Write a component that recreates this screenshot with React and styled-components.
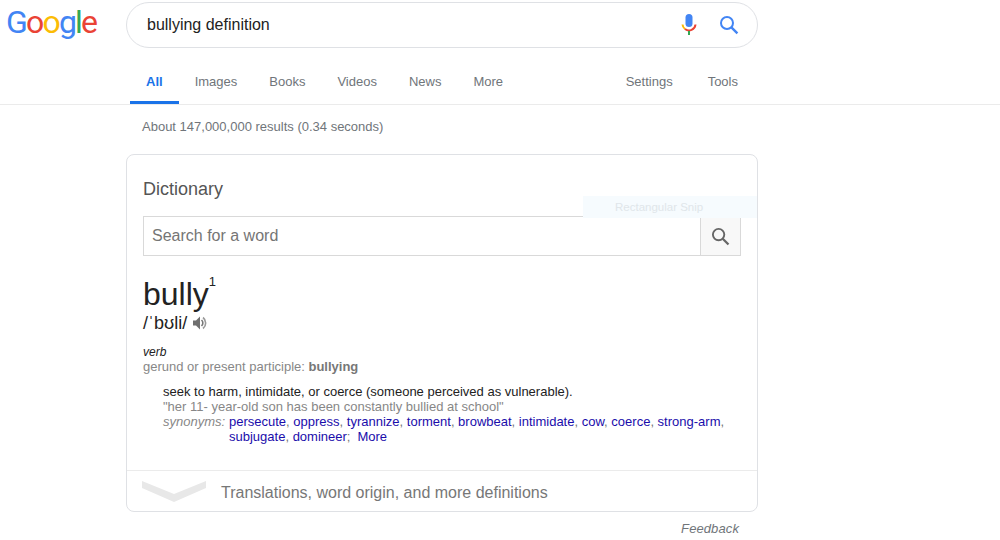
import React from 'react'
import styled, { createGlobalStyle } from 'styled-components'

const GlobalStyle = createGlobalStyle`
  html, body {
    margin: 0;
    background: #fff;
    font-family: "Liberation Sans", Arial, sans-serif;
    overflow: hidden;
  }
`

const Page = styled.div`
  position: relative;
  width: 1000px;
  height: 540px;
  overflow: hidden;
`

const Header = styled.header`
  height: 104px;
  border-bottom: 1px solid #ebebeb;
`

const TopRow = styled.div`
  display: flex;
  height: 50px;
  box-sizing: border-box;
  padding-top: 2px;
`

const Logo = styled.div`
  width: 126px;
  padding: 0 0 0 6px;
  box-sizing: border-box;
  font-family: Roboto, sans-serif;
  font-size: 32px;
  line-height: 41px;
  letter-spacing: -1.8px;
`

const LogoLetter = styled.span`
  color: ${p => p.$color};
`

const SearchBox = styled.div`
  width: 632px;
  height: 46px;
  box-sizing: border-box;
  display: flex;
  align-items: center;
  border: 1px solid #dfe1e5;
  border-radius: 23px;
  padding: 0 18px 0 20px;
  font-size: 16px;
  color: #222;
`

const Query = styled.span`
  flex: 1;
`

const IconSlot = styled.span`
  display: flex;
  margin-left: ${p => p.$gap || 0}px;
`

const Tabs = styled.nav`
  display: flex;
  width: 624px;
  height: 54px;
  margin-left: 130px;
  font-size: 13px;
  color: #70757a;
`

const Tab = styled.a`
  box-sizing: border-box;
  height: 54px;
  padding: 24px 16px 0;
  margin-left: ${p => p.$gap || 0}px;
  line-height: 16px;
  color: ${p => (p.$active ? '#1a73e8' : '#70757a')};
  font-weight: ${p => (p.$active ? 700 : 400)};
  border-bottom: 3px solid ${p => (p.$active ? '#1a73e8' : 'transparent')};
`

const TabSpacer = styled.span`
  flex: 1;
`

const Stats = styled.div`
  margin: 14px 0 0 142px;
  font-size: 13px;
  line-height: 16px;
  color: #70757a;
`

const Card = styled.section`
  width: 632px;
  height: 358px;
  box-sizing: border-box;
  margin: 19px 0 0 126px;
  border: 1px solid #dfe1e5;
  border-radius: 8px;
  display: flex;
  flex-direction: column;
`

const CardBody = styled.div`
  flex: 1;
  padding: 24px 16px 0;
`

const CardTitle = styled.h3`
  margin: 0;
  font-size: 18px;
  line-height: 20px;
  font-weight: 400;
  color: #555;
`

const WordSearch = styled.div`
  display: flex;
  height: 40px;
  margin-top: 17px;
  box-sizing: border-box;
  border: 1px solid #d9d9d9;
`

const WordInput = styled.div`
  flex: 1;
  padding-left: 8px;
  font-size: 16px;
  line-height: 37px;
  color: #757575;
`

const WordButton = styled.div`
  width: 39px;
  border-left: 1px solid #d9d9d9;
  background: #f8f8f8;
  display: flex;
  align-items: center;
  justify-content: center;
`

const Headword = styled.div`
  margin-top: 18px;
  font-size: 32px;
  line-height: 40px;
  color: #222;
`

const HomographNo = styled.sup`
  font-size: 13px;
  line-height: 0;
  vertical-align: 19px;
`

const Phonetic = styled.div`
  display: flex;
  align-items: center;
  gap: 5px;
  height: 18px;
  font-size: 18px;
  color: #222;
`

const PartOfSpeech = styled.div`
  margin-top: 13px;
  font-size: 12px;
  line-height: 14px;
  font-style: italic;
  color: #222;
`

const Inflection = styled.div`
  font-size: 13px;
  line-height: 15px;
  color: #878787;
`

const Strong = styled.b`
  font-weight: 700;
  color: #777;
`

const Sense = styled.div`
  margin: 10px 0 0 20px;
  font-size: 13px;
  line-height: 15px;
  color: #222;
`

const Example = styled.div`
  color: #878787;
`

const SynonymRow = styled.div`
  display: flex;
`

const SynonymLabel = styled.span`
  width: 66px;
  flex: none;
  font-style: italic;
  color: #878787;
`

const SynonymList = styled.div`
  color: #777;
`

const SynonymLink = styled.a`
  color: #1a0dab;
`

const MoreLink = styled.a`
  margin-left: 7px;
  color: #1a0dab;
`

const CardFooter = styled.div`
  height: 41px;
  box-sizing: border-box;
  border-top: 1px solid #ebebeb;
  display: flex;
  align-items: center;
  padding: 0 0 0 15px;
  gap: 15px;
  font-size: 16px;
  color: #777;
`

const FooterLabel = styled.span`
  padding-top: 4px;
`

const Feedback = styled.div`
  margin: 9px 0 0;
  padding-right: 261px;
  text-align: right;
  font-size: 13px;
  letter-spacing: 0.1px;
  line-height: 16px;
  font-style: italic;
  color: #70757a;
`

const SnipLabel = styled.div`
  position: absolute;
  left: 583px;
  top: 196px;
  width: 174px;
  height: 22px;
  padding-left: 32px;
  box-sizing: border-box;
  background: #f6fbfe;
  font-size: 11.5px;
  line-height: 22px;
  color: #e0e6ea;
`

const logoLetters = [
  ['G', '#4285f4'],
  ['o', '#ea4335'],
  ['o', '#fbbc05'],
  ['g', '#4285f4'],
  ['l', '#34a853'],
  ['e', '#ea4335'],
]

const leftTabs = ['Images', 'Books', 'Videos', 'News', 'More']

const synonyms = ['persecute', 'oppress', 'tyrannize', 'torment', 'browbeat', 'intimidate', 'cow', 'coerce', 'strong-arm', 'subjugate']

const MicIcon = () => (
  <svg width="16" height="24" viewBox="0 0 16 24">
    <rect x="4.5" y="1" width="7" height="13" rx="3.5" fill="#4285f4" />
    <path d="M1.5 11.5 A6.5 6.5 0 0 0 4 16" fill="none" stroke="#fbbc05" strokeWidth="2" />
    <path d="M4 16 A6.5 6.5 0 0 0 14.5 11.5" fill="none" stroke="#ea4335" strokeWidth="2" />
    <rect x="7" y="18" width="2" height="4" fill="#34a853" />
  </svg>
)

const LensIcon = ({ color, size = 20, stroke = 2 }) => (
  <svg width={size} height={size} viewBox="0 0 20 20">
    <circle cx="8" cy="8" r="6" fill="none" stroke={color} strokeWidth={stroke} />
    <path d="M12.4 12.4 L18.4 18.4" stroke={color} strokeWidth={stroke + 0.4} />
  </svg>
)

const SpeakerIcon = () => (
  <svg width="16" height="16" viewBox="0 0 16 16">
    <path d="M1 5.5 H4 L8 1.5 V14.5 L4 10.5 H1 Z" fill="#6f6f6f" />
    <path d="M9.5 5 A4 4 0 0 1 9.5 11" fill="none" stroke="#777" strokeWidth="1.6" />
    <path d="M11 2.5 A7 7 0 0 1 11 13.5" fill="none" stroke="#999" strokeWidth="1.6" />
  </svg>
)

const Chevron = () => (
  <svg width="64" height="21" viewBox="0 0 64 21">
    <path d="M0 0 L32 13 L64 0 V7 L32 21 L0 7 Z" fill="#e8e8e8" />
  </svg>
)

export default function App() {
  return (
    <Page>
      <GlobalStyle />
      <Header>
        <TopRow>
          <Logo>
            {logoLetters.map(([letter, color], index) => (
              <LogoLetter key={index} $color={color}>{letter}</LogoLetter>
            ))}
          </Logo>
          <SearchBox>
            <Query>bullying definition</Query>
            <IconSlot><MicIcon /></IconSlot>
            <IconSlot $gap={22}><LensIcon color="#4285f4" /></IconSlot>
          </SearchBox>
        </TopRow>
        <Tabs>
          <Tab $active>All</Tab>
          {leftTabs.map(name => <Tab key={name}>{name}</Tab>)}
          <TabSpacer />
          <Tab>Settings</Tab>
          <Tab $gap={3}>Tools</Tab>
        </Tabs>
      </Header>
      <Stats>About 147,000,000 results (0.34 seconds)</Stats>
      <Card>
        <CardBody>
          <CardTitle>Dictionary</CardTitle>
          <WordSearch>
            <WordInput>Search for a word</WordInput>
            <WordButton><LensIcon color="#666" size={19} /></WordButton>
          </WordSearch>
          <Headword>bully<HomographNo>1</HomographNo></Headword>
          <Phonetic>/ˈbʊli/ <SpeakerIcon /></Phonetic>
          <PartOfSpeech>verb</PartOfSpeech>
          <Inflection>gerund or present participle: <Strong>bullying</Strong></Inflection>
          <Sense>
            <div>seek to harm, intimidate, or coerce (someone perceived as vulnerable).</div>
            <Example>"her 11- year-old son has been constantly bullied at school"</Example>
            <SynonymRow>
              <SynonymLabel>synonyms:</SynonymLabel>
              <SynonymList>
                {synonyms.map(word => (
                  <React.Fragment key={word}>
                    <SynonymLink>{word}</SynonymLink>{', '}
                  </React.Fragment>
                ))}
                <SynonymLink>domineer</SynonymLink>;
                <MoreLink>More</MoreLink>
              </SynonymList>
            </SynonymRow>
          </Sense>
        </CardBody>
        <CardFooter>
          <Chevron />
          <FooterLabel>Translations, word origin, and more definitions</FooterLabel>
        </CardFooter>
      </Card>
      <Feedback>Feedback</Feedback>
      <SnipLabel>Rectangular Snip</SnipLabel>
    </Page>
  )
}
